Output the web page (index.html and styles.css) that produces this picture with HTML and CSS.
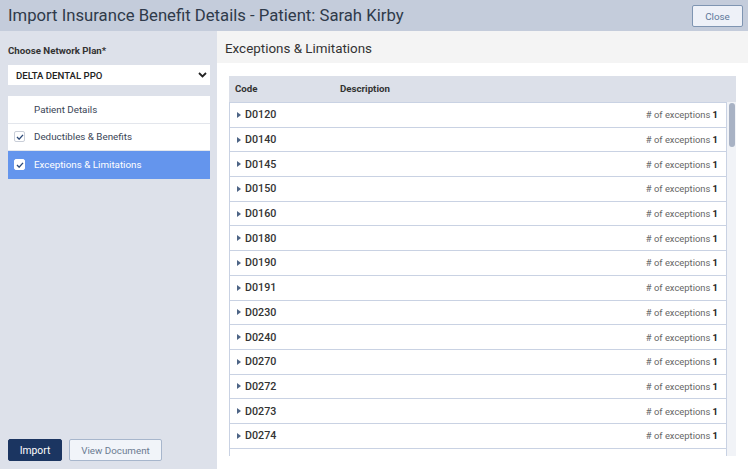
FILE: index.html
```html
<!DOCTYPE html>
<html>
<head>
<meta charset="utf-8">
<link rel="stylesheet" href="styles.css">
</head>
<body>
<div class="app">
  <header class="topbar">
    <h1 class="title">Import Insurance Benefit Details - Patient: Sarah Kirby</h1>
    <button class="btn-close">Close</button>
  </header>
  <div class="main">
    <aside class="sidebar">
      <div class="label">Choose Network Plan*</div>
      <div class="select">
        <span>DELTA DENTAL PPO</span>
        <svg class="chev" width="9" height="6" viewBox="0 0 9 6"><path d="M1 1 L4.5 4.5 L8 1" fill="none" stroke="#222" stroke-width="1.8"/></svg>
      </div>
      <ul class="nav">
        <li class="nav-item"><span class="cb-space"></span>Patient Details</li>
        <li class="nav-item"><span class="cb"><svg width="8" height="6" viewBox="0 0 9 7"><path d="M1 3.5 L3.5 6 L8 1" fill="none" stroke="#2d4a78" stroke-width="1.6"/></svg></span>Deductibles &amp; Benefits</li>
        <li class="nav-item active"><span class="cb"><svg width="8" height="6" viewBox="0 0 9 7"><path d="M1 3.5 L3.5 6 L8 1" fill="none" stroke="#2d4a78" stroke-width="1.6"/></svg></span>Exceptions &amp; Limitations</li>
      </ul>
      <div class="actions">
        <button class="btn-primary">Import</button>
        <button class="btn-secondary">View Document</button>
      </div>
    </aside>
    <section class="content">
      <h2 class="section-title">Exceptions &amp; Limitations</h2>
      <div class="table-wrap">
        <div class="thead">
          <span class="th-code">Code</span>
          <span class="th-desc">Description</span>
        </div>
        <div class="tbody">
          <div class="rows">
            <div class="row"><span class="tri"></span><span class="code">D0120</span><span class="count"># of exceptions <b>1</b></span></div>
            <div class="row"><span class="tri"></span><span class="code">D0140</span><span class="count"># of exceptions <b>1</b></span></div>
            <div class="row"><span class="tri"></span><span class="code">D0145</span><span class="count"># of exceptions <b>1</b></span></div>
            <div class="row"><span class="tri"></span><span class="code">D0150</span><span class="count"># of exceptions <b>1</b></span></div>
            <div class="row"><span class="tri"></span><span class="code">D0160</span><span class="count"># of exceptions <b>1</b></span></div>
            <div class="row"><span class="tri"></span><span class="code">D0180</span><span class="count"># of exceptions <b>1</b></span></div>
            <div class="row"><span class="tri"></span><span class="code">D0190</span><span class="count"># of exceptions <b>1</b></span></div>
            <div class="row"><span class="tri"></span><span class="code">D0191</span><span class="count"># of exceptions <b>1</b></span></div>
            <div class="row"><span class="tri"></span><span class="code">D0230</span><span class="count"># of exceptions <b>1</b></span></div>
            <div class="row"><span class="tri"></span><span class="code">D0240</span><span class="count"># of exceptions <b>1</b></span></div>
            <div class="row"><span class="tri"></span><span class="code">D0270</span><span class="count"># of exceptions <b>1</b></span></div>
            <div class="row"><span class="tri"></span><span class="code">D0272</span><span class="count"># of exceptions <b>1</b></span></div>
            <div class="row"><span class="tri"></span><span class="code">D0273</span><span class="count"># of exceptions <b>1</b></span></div>
            <div class="row"><span class="tri"></span><span class="code">D0274</span><span class="count"># of exceptions <b>1</b></span></div>
            <div class="row-blank"></div>
          </div>
          <div class="scrollbar"><div class="thumb"></div></div>
        </div>
      </div>
    </section>
  </div>
</div>
</body>
</html>
```
FILE: styles.css
```css
* { box-sizing: border-box; }
html, body { margin: 0; padding: 0; }
body {
  width: 748px;
  height: 469px;
  overflow: hidden;
  font-family: Roboto, "Liberation Sans", sans-serif;
  color: #333;
  background: #fff;
}
.app { display: flex; flex-direction: column; height: 469px; }

.topbar {
  height: 31px;
  background: #c4ccdb;
  display: flex;
  align-items: center;
  justify-content: space-between;
  padding: 0 5px 0 8px;
  flex-shrink: 0;
}
.title {
  margin: 0;
  font-size: 16.7px;
  font-weight: 400;
  color: #2f3a4a;
}
.btn-close {
  width: 51px;
  height: 22px;
  background: #eef1f8;
  border: 1px solid #7f95b2;
  border-radius: 2px;
  color: #60789a;
  font-family: inherit;
  font-size: 9.8px;
  padding: 0;
  margin-top: 1px;
}

.main { display: flex; flex: 1; min-height: 0; }

.sidebar {
  width: 217px;
  flex-shrink: 0;
  background: #dde1ea;
  padding: 13px 7px 8px 8px;
  display: flex;
  flex-direction: column;
}
.label {
  font-size: 9.7px;
  font-weight: 700;
  line-height: 14px;
  color: #333;
  margin-bottom: 7px;
}
.select {
  height: 20px;
  background: #fff;
  display: flex;
  align-items: center;
  justify-content: space-between;
  padding: 0 2px 0 8px;
  font-size: 9.6px;
  font-weight: 500;
  color: #222;
}
.chev { margin-right: 1px; }
.nav {
  list-style: none;
  margin: 11px 0 0 0;
  padding: 0;
}
.nav-item {
  height: 27.5px;
  background: #fff;
  border-bottom: 1px solid #e3e6ec;
  display: flex;
  align-items: center;
  font-size: 9.8px;
  color: #3a4556;
  padding-left: 6px;
}
.nav-item.active {
  background: #6495ed;
  color: #fff;
  border-bottom: none;
}
.cb-space { width: 11px; margin-right: 9px; }
.cb {
  width: 11px;
  height: 11px;
  background: #fff;
  border: 1px solid #c9ced8;
  border-radius: 2px;
  margin-right: 9px;
  display: flex;
  align-items: center;
  justify-content: center;
}
.active .cb { border-color: #fff; }
.actions {
  margin-top: auto;
  display: flex;
  gap: 7px;
}
.btn-primary {
  width: 54px;
  height: 22px;
  background: #1b3561;
  border: 1px solid #1b3561;
  border-radius: 2px;
  color: #fff;
  font-family: inherit;
  font-size: 10.3px;
  padding: 0;
}
.btn-secondary {
  width: 93px;
  height: 22px;
  background: #f1f4f9;
  border: 1px solid #a7b6cc;
  border-radius: 2px;
  color: #6b7b91;
  font-family: inherit;
  font-size: 9.8px;
  padding: 0;
}

.content {
  flex: 1;
  display: flex;
  flex-direction: column;
  min-width: 0;
  background: #fff;
}
.section-title {
  margin: 0;
  height: 32px;
  line-height: 36px;
  background: #f4f4f4;
  font-size: 13.4px;
  font-weight: 400;
  color: #333;
  padding-left: 8px;
  flex-shrink: 0;
}
.table-wrap {
  margin: 13px 12px 13px 12px;
  flex: 1;
  display: flex;
  flex-direction: column;
  min-height: 0;
}
.thead {
  height: 26px;
  background: #dce0e9;
  display: flex;
  align-items: center;
  font-size: 9.7px;
  font-weight: 700;
  color: #333;
  flex-shrink: 0;
  padding-bottom: 1px;
}
.th-code { width: 111px; padding-left: 6px; }
.tbody {
  flex: 1;
  display: flex;
  min-height: 0;
  overflow: hidden;
}
.rows {
  flex: 1;
  min-width: 0;
  overflow: hidden;
  border-top: 1px solid #c9d2e3;
  display: flex;
  flex-direction: column;
}
.row {
  height: 24.7px;
  flex-shrink: 0;
  border: 1px solid #c9d2e3;
  border-top: none;
  display: flex;
  align-items: center;
  padding: 0 8px 0 7px;
}
.row-blank {
  flex: 1;
  border-left: 1px solid #c9d2e3;
  border-right: 1px solid #c9d2e3;
}
.tri {
  width: 0;
  height: 0;
  border-left: 4px solid #4d6485;
  border-top: 3px solid transparent;
  border-bottom: 3px solid transparent;
  margin-right: 4px;
}
.code {
  font-size: 10.7px;
  font-weight: 500;
  color: #333;
  flex: 1;
}
.count {
  font-size: 9.4px;
  color: #666;
}
.count b { color: #222; font-weight: 700; }
.scrollbar {
  width: 9px;
  flex-shrink: 0;
  background: #f1f3f7;
  padding: 1px 1px 0 2px;
}
.thumb {
  height: 44px;
  background: #a8b2c4;
  border-radius: 3px;
}
```
